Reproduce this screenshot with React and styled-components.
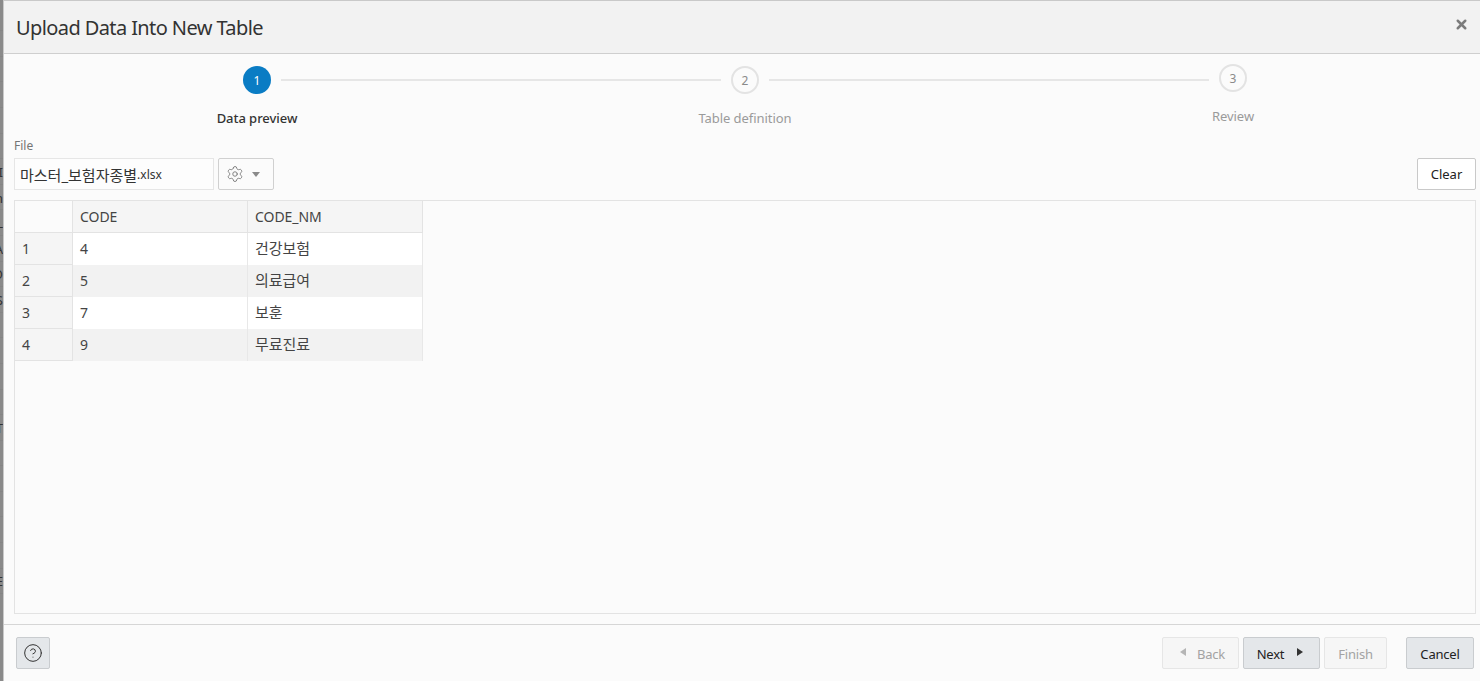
import React from "react";
import styled, { createGlobalStyle } from "styled-components";
import { CircleHelp, Settings, X } from "lucide-react";

const GlobalStyle = createGlobalStyle`
  html, body {
    margin: 0;
    height: 100%;
    overflow: hidden;
    font-family: "Noto Sans", "Noto Sans CJK KR", sans-serif;
    font-size: 13px;
    color: #333;
  }
`;

const steps = [
  { num: 1, label: "Data preview", state: "active" },
  { num: 2, label: "Table definition" },
  { num: 3, label: "Review", raised: true },
];

const rows = [
  { id: 1, code: "4", name: "건강보험" },
  { id: 2, code: "5", name: "의료급여" },
  { id: 3, code: "7", name: "보훈" },
  { id: 4, code: "9", name: "무료진료" },
];

// bits of the page behind the dialog, one per row of the table back there
const behind = ["", "", "", "", "", "", "I", "n", "L", "A", "O", "S", "", "", "", "", "T", "", "", "", "", "", "E"];

const App = () => {
  return (
    <Page>
      <GlobalStyle />
      <Backdrop>
        {behind.map((text, index) => (
          <BackdropRow key={index}>{text}</BackdropRow>
        ))}
      </Backdrop>
      <Dialog>
        <Header>
          <Title>Upload Data Into New Table</Title>
          <CloseButton>
            <X size={15} strokeWidth={4} />
          </CloseButton>
        </Header>

        <Train>
          {steps.map((step, index) => (
            <Step key={step.num}>
              <StepHead>
                <Connector $hidden={index === 0} />
                <Circle $active={step.state === "active"} $raised={step.raised}>
                  {step.num}
                </Circle>
                <Connector $hidden={index === steps.length - 1} />
              </StepHead>
              <StepLabel $active={step.state === "active"} $raised={step.raised}>
                {step.label}
              </StepLabel>
            </Step>
          ))}
        </Train>

        <Body>
          <FieldLabel>File</FieldLabel>
          <Toolbar>
            <FileInput>
              마스터_보험자종별<small>.xlsx</small>
            </FileInput>
            <MenuButton>
              <Settings size={18} strokeWidth={1.2} color="#777" />
              <Caret />
            </MenuButton>
            <ClearButton>Clear</ClearButton>
          </Toolbar>
          <Grid>
            <DataTable>
              <thead>
                <tr>
                  <Corner />
                  <HeadCell>CODE</HeadCell>
                  <HeadCell>CODE_NM</HeadCell>
                </tr>
              </thead>
              <tbody>
                {rows.map((row, index) => (
                  <tr key={row.id}>
                    <RowHead>{row.id}</RowHead>
                    <Cell $odd={index % 2 === 1}>{row.code}</Cell>
                    <Cell $odd={index % 2 === 1}>
                      <Hangul>{row.name}</Hangul>
                    </Cell>
                  </tr>
                ))}
              </tbody>
            </DataTable>
          </Grid>
        </Body>

        <Footer>
          <HelpButton>
            <CircleHelp size={20} strokeWidth={1.2} color="#333" />
          </HelpButton>
          <FooterRight>
            <WizardButton disabled $width={77} $shift="0 0 0 4px" $gap={11}>
              <Arrow $left $disabled />
              <ButtonText>Back</ButtonText>
            </WizardButton>
            <WizardButton $width={77} $primary $shift="0 3px 0 0" $gap={13}>
              <ButtonText>Next</ButtonText>
              <Arrow />
            </WizardButton>
            <WizardButton disabled $width={63}>
              <ButtonText>Finish</ButtonText>
            </WizardButton>
            <CancelButton>
              <ButtonText>Cancel</ButtonText>
            </CancelButton>
          </FooterRight>
        </Footer>
      </Dialog>
    </Page>
  );
};

const Page = styled.div`
  height: 681px;
  display: flex;
  background: #8a8a8a;
`;

const Backdrop = styled.div`
  width: 3px;
  flex: none;
  overflow: hidden;
  padding-top: 5.6px;
  box-sizing: border-box;
`;

const BackdropRow = styled.div`
  height: 25.6px;
  display: flex;
  justify-content: flex-end;
  align-items: center;
  font-size: 13px;
  line-height: 16px;
  color: #333;
  box-shadow: inset 0 -1px 0 #858585;
`;

const Dialog = styled.div`
  flex: 1;
  min-width: 0;
  height: 100%;
  display: flex;
  flex-direction: column;
  background: #fbfbfb;
  border-left: 1px solid #c9c9c9;
  border-top: 1px solid #c9c9c9;
  box-sizing: border-box;
`;

const Header = styled.div`
  height: 52px;
  flex: none;
  display: flex;
  align-items: center;
  justify-content: space-between;
  padding: 0 11px 0 12px;
  background: #f2f2f2;
  border-bottom: 1px solid #cfcfcf;
  box-sizing: content-box;
`;

const Title = styled.h1`
  margin: 2px 0 0;
  font-size: 20px;
  font-weight: 400;
  line-height: 26px;
  letter-spacing: -0.6px;
  color: #333;
`;

const CloseButton = styled.button`
  display: flex;
  padding: 0;
  border: 0;
  background: none;
  color: #7c7c7c;
  margin-bottom: 5px;
`;

const Train = styled.div`
  display: grid;
  grid-template-columns: repeat(3, 488px);
  padding: 12px 0 0 9px;
  flex: none;
`;

const Step = styled.div`
  display: flex;
  flex-direction: column;
  align-items: stretch;
  height: 75px;
`;

const StepHead = styled.div`
  display: flex;
  align-items: center;
  gap: 10px;
  height: 28px;
`;

const Connector = styled.span`
  flex: 1;
  height: 2px;
  background: ${(p) => (p.$hidden ? "transparent" : "#e6e6e6")};
`;

const Circle = styled.span`
  width: 28px;
  height: 28px;
  box-sizing: border-box;
  border-radius: 50%;
  display: flex;
  align-items: center;
  justify-content: center;
  font-size: 12px;
  color: ${(p) => (p.$active ? "#fff" : "#8a8a8a")};
  background: ${(p) => (p.$active ? "#0a7cc4" : "transparent")};
  border: ${(p) => (p.$active ? "0" : "2px solid #e3e3e3")};
  transform: ${(p) => (p.$raised ? "translateY(-2px)" : "none")};
`;

const StepLabel = styled.div`
  margin-top: 15px;
  text-align: center;
  font-size: 13px;
  line-height: 18px;
  letter-spacing: -0.05px;
  font-weight: ${(p) => (p.$active ? 500 : 400)};
  color: ${(p) => (p.$active ? "#333" : "#9a9a9a")};
  transform: ${(p) => (p.$raised ? "translateY(-2px)" : "none")};
`;

const Body = styled.div`
  flex: 1;
  min-height: 0;
  display: flex;
  flex-direction: column;
  padding: 0 4px 10px 10px;
`;

const FieldLabel = styled.div`
  font-size: 12px;
  line-height: 16px;
  color: #757575;
  height: 20px;
  margin-top: -3px;
`;

const Toolbar = styled.div`
  display: flex;
  align-items: stretch;
  gap: 4px;
  height: 32px;
  margin-bottom: 10px;
`;

const FileInput = styled.div`
  width: 200px;
  box-sizing: border-box;
  border: 1px solid #e6e6e6;
  padding: 0 5px;
  display: flex;
  align-items: center;
  background: #fdfdfd;
  font-size: 15px;
  small {
    font-size: 12px;
  }
`;

const MenuButton = styled.button`
  width: 56px;
  box-sizing: border-box;
  display: flex;
  align-items: center;
  gap: 8px;
  padding: 0 0 0 7px;
  background: #fbfbfb;
  border: 1px solid #d0d0d0;
  border-radius: 2px;
`;

const Caret = styled.span`
  width: 0;
  height: 0;
  border-left: 4.5px solid transparent;
  border-right: 4.5px solid transparent;
  border-top: 5px solid #8a8a8a;
`;

const ClearButton = styled.button`
  margin-left: auto;
  width: 59px;
  background: #fff;
  border: 1px solid #c9c9c9;
  border-radius: 2px;
  font: inherit;
  font-size: 13px;
  color: #222;
`;

const Grid = styled.div`
  flex: 1;
  min-height: 0;
  border: 1px solid #e3e3e3;
`;

const DataTable = styled.table`
  border-collapse: separate;
  border-spacing: 0;
  table-layout: fixed;
  width: 408px;
  font-size: 14px;
  letter-spacing: -0.05px;
  th,
  td {
    box-sizing: border-box;
  }
`;

const Corner = styled.th`
  width: 58px;
  height: 32px;
  padding: 0;
  border-right: 1px solid #e3e3e3;
  border-bottom: 1px solid #e3e3e3;
`;

const HeadCell = styled.th`
  width: 175px;
  padding: 0 7px;
  font-weight: 400;
  text-align: left;
  background: #f5f5f5;
  color: #444;
  border-right: 1px solid #e3e3e3;
  border-bottom: 1px solid #e3e3e3;
`;

const RowHead = styled.td`
  height: 32px;
  padding: 0 7px;
  background: #f5f5f5;
  color: #444;
  border-right: 1px solid #e3e3e3;
  border-bottom: 1px solid #e3e3e3;
`;

const Cell = styled.td`
  height: 32px;
  padding: 0 7px 2px;
  background: ${(p) => (p.$odd ? "#f2f2f2" : "#fff")};
  color: #444;
  border-right: 1px solid #e8e8e8;
`;

const Hangul = styled.span`
  font-size: 15px;
  line-height: 20px;
`;

const Footer = styled.div`
  height: 56px;
  flex: none;
  display: flex;
  align-items: center;
  justify-content: space-between;
  padding: 0 6px 0 12px;
  border-top: 1px solid #d6d6d6;
`;

const FooterRight = styled.div`
  display: flex;
  gap: 4px;
`;

const HelpButton = styled.button`
  width: 34px;
  height: 32px;
  display: flex;
  align-items: center;
  justify-content: center;
  padding: 0;
  background: #e4e7ea;
  border: 1px solid #c9cccf;
  border-radius: 2px;
`;

const ButtonText = styled.span`
  position: relative;
  top: 1px;
  letter-spacing: -0.2px;
`;

const WizardButton = styled.button`
  width: ${(p) => p.$width}px;
  height: 32px;
  display: flex;
  align-items: center;
  justify-content: center;
  gap: ${(p) => p.$gap || 0}px;
  padding: ${(p) => p.$shift || 0};
  border-radius: 2px;
  font: inherit;
  font-size: 13px;
  background: ${(p) => (p.$primary ? "#e4e7ea" : "#f6f6f6")};
  border: 1px solid ${(p) => (p.$primary ? "#c9cccf" : "#e6e6e6")};
  color: ${(p) => (p.$primary ? "#222" : "#a3a3a3")};
`;

const CancelButton = styled.button`
  width: 68px;
  height: 32px;
  margin-left: 15px;
  padding: 0;
  border-radius: 2px;
  font: inherit;
  font-size: 13px;
  background: #e4e7ea;
  border: 1px solid #c9cccf;
  color: #222;
`;

const Arrow = styled.span`
  width: 0;
  height: 0;
  margin-bottom: 2px;
  border-top: 4.5px solid transparent;
  border-bottom: 4.5px solid transparent;
  ${(p) =>
    p.$left
      ? `border-right: 6px solid ${p.$disabled ? "#b5b5b5" : "#333"};`
      : `border-left: 6px solid ${p.$disabled ? "#b5b5b5" : "#333"};`}
`;

export default App;
